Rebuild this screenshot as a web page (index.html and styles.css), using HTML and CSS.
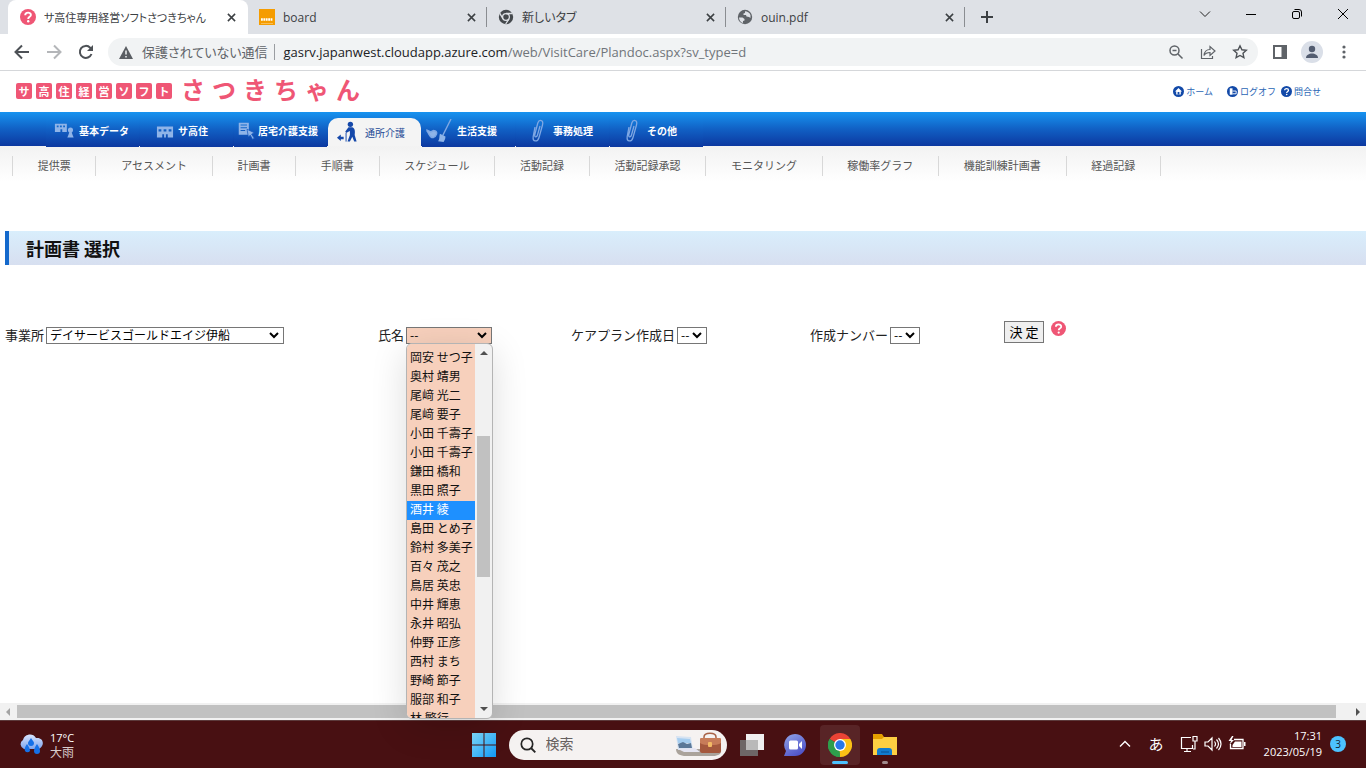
FILE: index.html
```html
<!DOCTYPE html>
<html lang="ja">
<head>
<meta charset="utf-8">
<title>サ高住専用経営ソフトさつきちゃん</title>
<link rel="stylesheet" href="styles.css">
</head>
<body>
<svg class="defs" aria-hidden="true">
  <symbol id="close" viewBox="0 0 10 10"><path d="M1 1l8 8M9 1L1 9" stroke="#3c4043" stroke-width="1.7" fill="none"/></symbol>
  <symbol id="help" viewBox="0 0 16 16"><circle cx="8" cy="8" r="8" fill="#ef5675"/><path d="M5.2 6.2C5.2 2.8 11 2.9 10.900 6C10.900 7.900 8.200 7.700 8.200 9.900" stroke="#fff" stroke-width="1.900" fill="none"/><circle cx="8.200" cy="12.300" r="1.200" fill="#fff"/></symbol>
  <symbol id="building" viewBox="0 0 18 14"><path fill-rule="evenodd" d="M0 1h18v12h-6V9.500H10V13H8V9.500H6V13H0zM2 4v2.500h3V4zM7.500 4v2.500h3V4zM13 4v2.500h3V4z"/></symbol>
  <symbol id="clip" viewBox="0 0 14 24"><path d="M4 8L2.200 17.500C1.500 23 6.500 23.500 8 18.500L11.500 6C13 .5 8 .2 6.800 4L3.800 15.500C3.200 18.500 5.700 18.700 6.500 16L9 7" fill="none" stroke="currentColor" stroke-width="1.300"/></symbol>
</svg>

<header class="browser">
  <div class="tabs">
    <div class="tab tab-active">
      <svg class="favicon"><use href="#help"/></svg>
      <span class="tab-title">サ高住専用経営ソフトさつきちゃん</span>
      <button class="tab-close" aria-label="閉じる"><svg><use href="#close"/></svg></button>
    </div>
    <div class="tab">
      <svg class="favicon" viewBox="0 0 16 16"><path fill="#f59c00" d="M0 0h16v16H0z"/><path d="M2 10.500h12" stroke="#fff" stroke-width="2.400" stroke-dasharray="1.800 .6"/><path d="M2 14.500h12" stroke="#fbd38c" stroke-width=".6"/></svg>
      <span class="tab-title">board</span>
      <button class="tab-close" aria-label="閉じる"><svg><use href="#close"/></svg></button>
    </div>
    <div class="tab">
      <svg class="favicon" viewBox="0 0 16 16"><circle cx="8" cy="8" r="7.200" fill="#45494d"/><circle cx="8" cy="8" r="3.400" fill="none" stroke="#dee1e6" stroke-width="1.300"/><path d="M8 4.500h6.500M5 9.800L1.700 4.200M11 9.800L7.700 15" stroke="#dee1e6" stroke-width="1.300"/></svg>
      <span class="tab-title">新しいタブ</span>
      <button class="tab-close" aria-label="閉じる"><svg><use href="#close"/></svg></button>
    </div>
    <div class="tab">
      <svg class="favicon" viewBox="0 0 16 16"><circle cx="8" cy="8" r="7.200" fill="#5f6368"/><path d="M2 8.500h3.500l2 1.500v1.500L6 12v2C3.500 13.300 2 11 2 8.500zM8 2.300c2 0 4.500 1.300 5.500 3.700v3L12 8l-2.500-.5L9 6H6.500V4.500L8 4z" fill="#dee1e6"/></svg>
      <span class="tab-title">ouin.pdf</span>
      <button class="tab-close" aria-label="閉じる"><svg><use href="#close"/></svg></button>
    </div>
    <button class="new-tab" aria-label="新しいタブを開く"><svg viewBox="0 0 12 12"><path d="M6 0v12M0 6h12" stroke="#3c4043" stroke-width="2"/></svg></button>
    <div class="window-buttons">
      <button aria-label="タブを検索"><svg viewBox="0 0 12 12"><path d="M1 3.500l5 5 5-5" fill="none" stroke="#222"/></svg></button>
      <button aria-label="最小化"><svg viewBox="0 0 12 12"><path d="M1 6.500h10" stroke="#000"/></svg></button>
      <button aria-label="元に戻す"><svg viewBox="0 0 12 12"><rect x="1.500" y="3.500" width="7" height="7" rx="1.500" fill="none" stroke="#000"/><path d="M3.500 1.500H8a2.500 2.500 0 0 1 2.500 2.500v4.500" fill="none" stroke="#000"/></svg></button>
      <button aria-label="閉じる"><svg viewBox="0 0 12 12"><path d="M1 1l10 10M11 1L1 11" stroke="#000"/></svg></button>
    </div>
  </div>
  <div class="toolbar">
    <div class="history">
      <button aria-label="戻る"><svg viewBox="0 0 16 16"><path d="M15 8H2M8 1.500L1.500 8 8 14.500" fill="none" stroke="#4d5156" stroke-width="2"/></svg></button>
      <button aria-label="進む"><svg viewBox="0 0 16 16"><path d="M1 8h13M8 1.500L14.500 8 8 14.500" fill="none" stroke="#b4b6b9" stroke-width="2"/></svg></button>
      <button aria-label="再読み込み"><svg viewBox="0 0 16 16"><path d="M13.500 10A6 6 0 1 1 12.200 3.700L14 5.500" fill="none" stroke="#4d5156" stroke-width="2"/><path d="M15 1v6H9z" fill="#4d5156"/></svg></button>
    </div>
    <div class="omnibox">
      <svg class="warn" viewBox="0 0 14 13"><path d="M7 0l7 13H0z" fill="#5a5e63"/><path d="M7 4.500v4M7 10v1.500" stroke="#f1f3f4" stroke-width="1.500"/></svg>
      <span class="insecure">保護されていない通信</span>
      <span class="url"><b>gasrv.japanwest.cloudapp.azure.com</b>/web/VisitCare/Plandoc.aspx?sv_type=d</span>
      <div class="omni-actions">
        <button aria-label="ズーム"><svg viewBox="0 0 16 16"><circle cx="6.500" cy="6.500" r="4.500" fill="none" stroke="#5f6368" stroke-width="1.500"/><path d="M4.500 6.500h4M10 10l4.500 4.500" stroke="#5f6368" stroke-width="1.500"/></svg></button>
        <button aria-label="共有"><svg viewBox="0 0 16 16"><path d="M1.500 5v9.500h11V12M4 11.500C4.500 7 7 5.500 10 5.500V2.500l5 4.500-5 4.500v-3c-2.500 0-4.500.5-6 3z" fill="none" stroke="#5f6368" stroke-width="1.200"/></svg></button>
        <button aria-label="ブックマーク"><svg viewBox="0 0 16 16"><path d="M8 1.800l1.900 4 4.400.5-3.300 3 .9 4.400L8 11.500l-3.900 2.200.9-4.400-3.300-3 4.400-.5z" fill="none" stroke="#4d5156" stroke-width="1.400"/></svg></button>
      </div>
    </div>
    <div class="tool-actions">
      <button aria-label="サイドパネル"><svg viewBox="0 0 16 16"><path fill="#5f6368" fill-rule="evenodd" d="M1 1h14v14H1zM3 3v10h6.500V3z"/></svg></button>
      <button class="avatar" aria-label="プロフィール"><svg viewBox="0 0 16 16"><circle cx="8" cy="5" r="3.200" fill="#525c70"/><path d="M2 14c0-6 12-6 12 0z" fill="#525c70"/></svg></button>
      <button aria-label="メニュー"><svg viewBox="0 0 16 16" fill="#5f6368"><circle cx="8" cy="3" r="1.600"/><circle cx="8" cy="8" r="1.600"/><circle cx="8" cy="13" r="1.600"/></svg></button>
    </div>
  </div>
</header>

<main class="page">
  <div class="site-head">
    <a class="logo" href="#" aria-label="サ高住経営ソフト さつきちゃん">
      <span class="tiles"><i>サ</i><i>高</i><i>住</i><i>経</i><i>営</i><i>ソ</i><i>フ</i><i>ト</i></span>
      <span class="brand"><i>さ</i><i>つ</i><i>き</i><i>ち</i><i>ゃ</i><i>ん</i></span>
    </a>
    <div class="site-links">
      <a class="home" href="#"><svg viewBox="0 0 12 12"><circle cx="6" cy="6" r="6" fill="#1249a8"/><path d="M6 2.200L2.200 6h1.300v3.300h5V6h1.300z" fill="#fff"/><path d="M5 6.500h2v2.800H5z" fill="#1249a8"/></svg>ホーム</a>
      <a href="#"><svg viewBox="0 0 12 12"><circle cx="6" cy="6" r="6" fill="#1249a8"/><path d="M3 2.500h3v7H3z" fill="#fff"/><path d="M6 5.500h4v3H6" stroke="#fff" fill="none"/></svg>ログオフ</a>
      <a href="#"><svg viewBox="0 0 12 12"><circle cx="6" cy="6" r="6" fill="#1249a8"/><path d="M4 4.700c0-2.500 4.200-2.400 4.200 0C8.200 6 6.200 6 6.200 7.500" stroke="#fff" stroke-width="1.400" fill="none"/><circle cx="6.200" cy="9.300" r=".9" fill="#fff"/></svg>問合せ</a>
    </div>
  </div>

  <nav class="main-nav">
    <a href="#"><svg viewBox="0 0 24 20"><path fill-rule="evenodd" d="M1 2h13v9H9V8H7v3H1zM3 4v2h2V4zM6.500 4v2h2V4zM10 4v2h2V4z"/><circle cx="18" cy="9" r="2.800"/><path d="M16.800 11h2.400l1.300 4 1 2h-7l1-2z"/></svg>基本データ</a>
    <a class="roomy" href="#"><svg viewBox="0 0 24 20"><use href="#building" x="3" y="4" width="18" height="14"/></svg>サ高住</a>
    <a class="tight" href="#"><svg viewBox="0 0 24 20"><path fill-rule="evenodd" d="M3 1h11v13H3zM5 3v1h7V3zM5 6v1h7V6zM5 9v1h5V9z"/><path d="M12 8l8 4-3 1.500 3 4.500-2 1-2.500-4.500-2 2z" stroke="#1458bf" stroke-width=".8"/></svg>居宅介護支援</a>
    <a class="current" href="#"><svg viewBox="0 0 24 22" fill="#1548aa"><circle cx="15" cy="3" r="2.800"/><path d="M13 6h4c3 1 3 5 2.500 8l2 7h-2.500l-2-5-2.500 5H12l2.500-7V10l-4 2-.8-1.500z"/><path d="M10.500 12v9" stroke="#1548aa"/><path d="M1 17l4-3.500V16h3v2.500H5v2z"/></svg>通所介護</a>
    <a href="#"><svg class="broom" viewBox="0 0 28 26"><path d="M1 12l4 2 3-1.500 2 .5c3 1 1 6-2 7-4 1-4-3-7-7zM27 0L18 18" stroke="currentColor" stroke-width="1.500"/><path d="M15 16l6 3c0 3-1 4-2 6l-6-1c2-2 1-5 2-8z"/></svg>生活支援</a>
    <a href="#"><svg class="clip"><use href="#clip"/></svg>事務処理</a>
    <a href="#"><svg class="clip"><use href="#clip"/></svg>その他</a>
  </nav>

  <nav class="sub-nav">
    <div class="sub-items"><a href="#">提供票</a><a href="#">アセスメント</a><a href="#">計画書</a><a href="#">手順書</a><a href="#">スケジュール</a><a href="#">活動記録</a><a href="#">活動記録承認</a><a href="#">モニタリング</a><a href="#">稼働率グラフ</a><a href="#">機能訓練計画書</a><a href="#">経過記録</a></div>
  </nav>

  <h1 class="title">計画書 選択</h1>

  <form class="filters">
    <div class="field"><label for="office">事業所</label><select id="office" class="wide"><option>デイサービスゴールドエイジ伊船</option></select></div>
    <div class="field">
      <label for="person">氏名</label>
      <div class="picker">
        <select id="person" class="person"><option>--</option></select>
        <div class="popup">
          <ul role="listbox" aria-label="氏名">
            <li role="option">岡安 せつ子</li><li role="option">奥村 靖男</li><li role="option">尾﨑 光二</li><li role="option">尾﨑 要子</li><li role="option">小田 千壽子</li><li role="option">小田 千壽子</li><li role="option">鎌田 橋和</li><li role="option">黒田 照子</li><li role="option" aria-selected="true">酒井 綾</li><li role="option">島田 とめ子</li><li role="option">鈴村 多美子</li><li role="option">百々 茂之</li><li role="option">鳥居 英忠</li><li role="option">中井 輝恵</li><li role="option">永井 昭弘</li><li role="option">仲野 正彦</li><li role="option">西村 まち</li><li role="option">野崎 節子</li><li role="option">服部 和子</li><li role="option">林 繁行</li>
          </ul>
          <div class="v-scroll">
            <svg viewBox="0 0 8 8"><path d="M0 6l4-4 4 4z" fill="#505050"/></svg>
            <div class="v-track"><div class="v-thumb"></div></div>
            <svg viewBox="0 0 8 8"><path d="M0 2l4 4 4-4z" fill="#505050"/></svg>
          </div>
        </div>
      </div>
    </div>
    <div class="field"><label for="date">ケアプラン作成日</label><select id="date" class="short"><option>--</option></select></div>
    <div class="field"><label for="number">作成ナンバー</label><select id="number" class="short"><option>--</option></select></div>
    <div class="submit"><button type="button">決 定</button><svg class="hint" role="img" aria-label="ヘルプ"><use href="#help"/></svg></div>
  </form>
</main>

<div class="h-scroll">
  <svg viewBox="0 0 8 8"><path d="M6 0L2 4l4 4z" fill="#a3a3a3"/></svg>
  <div class="h-track"><div class="h-thumb"></div></div>
  <svg viewBox="0 0 8 8"><path d="M2 0l4 4-4 4z" fill="#505050"/></svg>
</div>

<footer class="taskbar">
  <div class="weather">
    <svg viewBox="0 0 24 24"><defs><linearGradient id="cloud" x2="0" y2="1"><stop stop-color="#d8e6ff"/><stop offset="1" stop-color="#7fa4ec"/></linearGradient></defs><path d="M5 16a5 5 0 0 1-1-9C5 1 14-1 17 5c8-1 9 8 3 11z" fill="url(#cloud)"/><path d="M12 5c2 3 3 4 3 5a3 3 0 0 1-6 0c0-1 1-2 3-5zM8 11c2 3 3 5 3 7a3 3 0 0 1-5 0c-1-2 0-4 2-7zM18 11c2 3 3 5 3 7a3 3 0 0 1-6 0c0-2 1-4 3-7z" fill="#1570e8"/></svg>
    <div><div class="temp">17°C</div><div>大雨</div></div>
  </div>
  <div class="apps">
    <button aria-label="スタート"><svg viewBox="0 0 24 24"><defs><linearGradient id="win" x2="1" y2="1"><stop stop-color="#80dcff"/><stop offset="1" stop-color="#1098f5"/></linearGradient></defs><path d="M0 0h11.500v11.500H0zM12.500 0H24v11.500H12.500zM0 12.500h11.500V24H0zM12.500 12.500H24V24H12.500z" fill="url(#win)"/></svg></button>
    <div class="search">
      <svg class="lens" viewBox="0 0 16 16"><circle cx="7" cy="7" r="5.700" fill="none" stroke="#252525" stroke-width="1.700"/><path d="M11 11l4.300 4.300" stroke="#252525" stroke-width="1.900"/></svg>
      <input type="text" placeholder="検索" aria-label="検索">
      <svg class="art" viewBox="0 0 48 26"><path d="M1 17h45c1 5-3 7-8 7H11C5 24 1 22 1 17z" fill="#aaa39b"/><path d="M1 4l15 1 2 13H3z" fill="#d6e3f2"/><path d="M2 6l13 1 1 4H3z" fill="#a5cdf0"/><path d="M3 12l5-2 4 2 4-1 1 5H4z" fill="#5b7898"/><path d="M3 17l17-1 5 4H9z" fill="#e5e5f2"/><path d="M29 8V5c0-5 12-5 12 0v3" fill="none" stroke="#a86145" stroke-width="1.500"/><rect x="25" y="6" width="21" height="15" rx="2" fill="#a4583d"/><path d="M25 8c0-2 1-2 3-2h15c2 0 3 0 3 2v3c-4 3-17 3-21 0z" fill="#c77c59"/><rect x="33" y="10" width="4" height="5" rx="1" fill="#f2ba65"/></svg>
    </div>
    <button aria-label="タスク ビュー"><svg viewBox="0 0 24 24"><path d="M6 1h18v16H6z" fill="#efefef"/><path d="M0 7h18v16H0z" fill="#6d6666"/><path d="M6 7h12v10H6z" fill="#b9b9b9"/></svg></button>
    <button class="chat" aria-label="チャット"><svg viewBox="0 0 24 24"><defs><linearGradient id="chat" x2=".6" y2="1"><stop stop-color="#91a5e8"/><stop offset="1" stop-color="#5053c8"/></linearGradient></defs><path d="M12 1a11 11 0 1 1 0 22H1l2-5A11 11 0 0 1 12 1z" fill="url(#chat)"/><rect x="6" y="7.500" width="9" height="9" rx="1.500" fill="#fff"/><path d="M16 11l3-3v8l-3-3z" fill="#fff"/></svg></button>
    <button class="running" aria-label="Chrome"><svg viewBox="0 0 24 24"><path d="M12 12L1.600 6A12 12 0 0 1 22.400 6z" fill="#ea4335"/><path d="M12 12L22.400 6A12 12 0 0 1 12 24z" fill="#fbc116"/><path d="M12 12v12A12 12 0 0 1 1.600 6z" fill="#2e9e4c"/><path d="M12 6h10.400L17.200 15 12 24l-1-6z" fill="#fbc116"/><path d="M1.600 6l5.200 9 5 3.500L12 24A12 12 0 0 1 1.600 6z" fill="#2e9e4c"/><circle cx="12" cy="12" r="6" fill="#fff"/><circle cx="12" cy="12" r="4.700" fill="#2877e8"/></svg></button>
    <button class="folder" aria-label="エクスプローラー"><svg viewBox="0 0 24 24"><path d="M0 1h9l2 3h13v6H0z" fill="#e5a000"/><path d="M0 6h9l2-2h13v18H0z" fill="#fdcf42"/><path d="M4 22v-4a3 3 0 0 1 3-3h9a3 3 0 0 1 3 3v4z" fill="#117ccf"/><path d="M8 19h8" stroke="#0c5ea5" stroke-width="1.500"/></svg></button>
  </div>
  <div class="tray">
    <svg class="up" viewBox="0 0 12 12"><path d="M1 8.500l5-5 5 5" fill="none" stroke="#fff" stroke-width="1.400"/></svg>
    <span class="ime">あ</span>
    <div class="status">
      <svg viewBox="0 0 18 18"><path d="M11 2.500H1.500v11h11V10M7 13.500v3M4 16.500h7M13 1.500h4v4.500h-4zM15 6v8h-2" fill="none" stroke="#fff" stroke-width="1.200"/></svg>
      <svg viewBox="0 0 18 18"><path d="M1 7h3l4-4v12l-4-4H1zM10.500 6.500q2 2.500 0 5M12.500 4.500q4 4.500 0 9M14.500 3q5 6 0 12" fill="none" stroke="#fff" stroke-width="1.200"/></svg>
      <svg viewBox="0 0 18 18"><path d="M6 4.500h9v9H2.500V9" fill="none" stroke="#fff" stroke-width="1.300"/><path d="M7 6.500h6.500v5.500H4.500V10zM16 7h1.500v4H16zM4 1L.5 6H3L1.500 9.500 6 5H3.500L5.500 1z" fill="#fff"/></svg>
    </div>
    <div class="clock"><div>17:31</div><div>2023/05/19</div></div>
    <span class="count">3</span>
  </div>
</footer>
</body>
</html>
```
FILE: styles.css
```css
* { box-sizing: border-box; }

body {
  margin: 0;
  min-height: 100vh;
  display: flex;
  flex-direction: column;
  overflow: hidden;
  background: #fff;
  color: #000;
  font-family: "Noto Sans CJK JP", sans-serif;
  font-size: 12px;
  font-weight: 400;
}

a { color: inherit; text-decoration: none; }
i { font-style: normal; }
svg { display: block; flex: none; }
button { padding: 0; border: 0; background: none; font: inherit; color: inherit; }
.defs { position: absolute; width: 0; height: 0; }

/* Browser frame */
.browser { font-family: "Open Sans", "Noto Sans CJK JP", sans-serif; color: #3c4043; }
.tabs { display: flex; align-items: stretch; height: 34px; padding-left: 8px; background: #dee1e6; }
.tab { display: flex; align-items: center; width: 239px; padding: 0 11px; position: relative; }
.tab::after { content: ""; position: absolute; right: 0; top: 7px; height: 20px; width: 1px; background: #8a8d91; }
.tab-active { width: 240px; padding: 0 12px; background: #fff; border-radius: 8px 8px 0 0; }
.tab-active::after { display: none; }
.favicon { width: 16px; height: 16px; margin-right: 8px; }
.tab-title { flex: 1; font-size: 12px; font-feature-settings: "palt"; white-space: nowrap; overflow: hidden; }
.tab-active .tab-title { font-size: 11px; }
.tab-close svg { width: 9px; height: 9px; }
.new-tab { width: 44px; display: grid; place-items: center; }
.new-tab svg { width: 12px; height: 12px; }
.window-buttons { display: flex; margin-left: auto; height: 28px; }
.window-buttons button { width: 46px; display: grid; place-items: center; }
.window-buttons svg { width: 12px; height: 12px; }

.toolbar { display: flex; align-items: center; height: 37px; border-bottom: 1px solid #d5d7da; background: #fff; }
.history { display: flex; gap: 16px; padding: 0 14px; }
.history svg { width: 16px; height: 16px; }
.omnibox { flex: 1; display: flex; align-items: center; height: 28px; padding: 0 10px; border-radius: 14px; background: #f1f3f4; }
.warn { width: 14px; height: 13px; margin: 0 9px 0 1px; }
.insecure { padding-right: 7px; border-right: 1px solid #9a9da1; color: #5f6368; font-size: 13px; line-height: 16px; font-feature-settings: "palt"; }
.url { padding-left: 8px; color: #70757a; font-size: 13px; }
.url b { color: #202124; font-weight: 400; }
.omni-actions { display: flex; gap: 16px; margin-left: auto; }
.omni-actions svg { width: 16px; height: 16px; }
.tool-actions { display: flex; align-items: center; gap: 13px; padding: 0 14px; }
.tool-actions svg { width: 16px; height: 16px; }
.avatar { display: grid; place-items: center; width: 22px; height: 22px; border-radius: 50%; background: #dadfe8; }

/* Site */
.page { flex: 1; }
.site-head { display: flex; justify-content: space-between; height: 41px; padding: 0 45px 0 16px; }
.logo { display: flex; align-items: center; gap: 9px; padding-bottom: 2px; color: #ef5675; font-weight: 700; }
.tiles { display: flex; gap: 4px; }
.tiles i { width: 16px; height: 16px; border-radius: 2px; background: #ef5675; color: #fff; font-size: 11px; line-height: 16px; text-align: center; }
.brand { display: flex; gap: 7px; padding-bottom: 4px; font-size: 24px; line-height: 36px; }
.site-links { display: flex; align-items: center; gap: 5px; color: #2a66b5; font-size: 9px; }
.site-links a { display: flex; align-items: center; gap: 2px; }
.site-links svg { width: 11px; height: 11px; }
.site-links .home { margin-right: 9px; }

.main-nav { display: flex; gap: 1px; height: 34px; padding-left: 46px; background: linear-gradient(#1793f0, #1160c4 50%, #0c38a0); color: #fff; font-size: 10px; font-weight: 700; }
.main-nav a { display: flex; align-items: center; gap: 3px; width: 93px; height: 35px; padding: 2px 0 0 8px; background: linear-gradient(#1793f0, #1160c4 50%, #0c38a0); white-space: nowrap; }
.main-nav .roomy { gap: 2px; padding-left: 14px; }
.main-nav .tight { gap: 0; padding-left: 2px; }
.main-nav a:not(.current) svg { fill: #8fb4e8; color: #7fa8e4; }
.main-nav svg { width: 22px; height: 20px; }
.main-nav .clip { width: 14px; height: 24px; margin: 0 5px 0 7px; fill: none; }
.main-nav .broom { width: 26px; height: 24px; margin: 0 2px 0 -4px; }
.main-nav .current { align-self: flex-end; height: 28px; padding-top: 0; border-radius: 10px 10px 0 0; background: #f4f4f4; color: #244a94; font-weight: 400; }
.main-nav .current svg { width: 23px; height: 22px; margin-right: 3px; }

.sub-nav { height: 42px; padding: 10px 0 0 12px; background: linear-gradient(#f2f2f2, #fff 85%); color: #555; font-size: 11px; }
.sub-items { display: flex; max-width: 1149px; }
.sub-items a { flex: 1 1 auto; padding: 0 24px 2px; border-left: 1px solid #d8d8d8; line-height: 18px; text-align: center; white-space: nowrap; }
.sub-items a:last-child { border-right: 1px solid #d8d8d8; }

.title { margin: 43px 0 0 5px; padding-left: 17px; border-left: 4px solid #1469cc; background: linear-gradient(#d9eefc, #d7dff0); color: #111; font-size: 18px; line-height: 34px; font-weight: 700; }

.filters { display: grid; grid-template-columns: 373fr 193fr 239fr 194fr 362fr; align-items: center; margin-top: 56px; padding-left: 5px; }
.field { display: flex; align-items: center; gap: 2px; height: 28px; color: #222; white-space: nowrap; }
.field label { padding-bottom: 2px; font-size: 13px; }
select {
  appearance: none;
  height: 17px;
  padding: 0 0 0 3px;
  border: 1px solid #767676;
  border-radius: 0;
  background: #fff url("data:image/svg+xml,%3Csvg xmlns='http://www.w3.org/2000/svg' viewBox='0 0 10 7'%3E%3Cpath d='M1 1l4 4 4-4' fill='none' stroke='%23000' stroke-width='2'/%3E%3C/svg%3E") no-repeat right 4px center / 10px 7px;
  color: #000;
  font-family: "Noto Sans CJK JP", sans-serif;
  font-size: 12px;
  line-height: 14px;
}
.wide { width: 238px; }
.person { display: block; width: 86px; background-color: #f7d0bc; }
.short { width: 30px; }
.submit { display: flex; align-items: flex-start; gap: 7px; height: 28px; }
.submit button { width: 40px; height: 22px; border: 1px solid #767676; background: #efefef; font-size: 13px; line-height: 18px; }
.hint { width: 15px; height: 15px; }

.picker { position: relative; }
.popup { position: absolute; top: 16px; left: 0; z-index: 5; display: flex; width: 87px; height: 376px; overflow: hidden; border: 1px solid #b4b4b4; border-radius: 6px; background: #f1f1f1; box-shadow: 0 8px 36px rgba(0, 0, 0, .14); }
.popup ul { flex: 1; margin: 0; padding: 5px 0 0; list-style: none; background: #f7d0bc; color: #111; }
.popup li { padding: 0 0 3px 3px; font-size: 12px; line-height: 16px; white-space: nowrap; }
.popup li[aria-selected] { background: #1e90ff; color: #fff; }
.v-scroll { display: flex; flex-direction: column; align-items: center; gap: 5px; width: 17px; padding: 5px 0; }
.v-scroll svg { width: 8px; height: 8px; }
.v-track { flex: 1; width: 13px; padding-top: 74px; }
.v-thumb { height: 141px; background: #c1c1c1; }

.h-scroll { display: flex; align-items: center; gap: 5px; height: 17px; padding: 0 4px; background: #f1f1f1; }
.h-scroll svg { width: 8px; height: 8px; }
.h-track { flex: 1; padding-right: 13px; }
.h-thumb { height: 13px; background: #c1c1c1; }

/* Taskbar */
.taskbar { display: grid; grid-template-columns: 1fr auto 1fr; align-items: center; height: 48px; border-top: 1px solid #5c3a3b; background: #481012; color: #fff; font-family: "Open Sans", "Noto Sans CJK JP", sans-serif; }
.weather { display: flex; align-items: center; gap: 7px; padding-left: 19px; font-size: 12px; line-height: 15px; color: #d8cccc; }
.weather svg { width: 24px; height: 24px; }
.temp { font-size: 11px; color: #fff; }
.apps { display: flex; align-items: center; gap: 13px; padding-left: 2px; }
.apps svg { width: 24px; height: 24px; }
.search { display: flex; align-items: center; width: 218px; height: 30px; padding: 0 4px 0 11px; border-radius: 15px; background: #f5f2f1; }
.search input { flex: 1; min-width: 0; padding: 0 0 3px 10px; border: 0; background: none; font: 14px "Noto Sans CJK JP", sans-serif; }
.search input::placeholder { color: #66605f; }
.search .lens { width: 16px; height: 16px; }
.search .art { width: 48px; height: 28px; }
.chat { margin-left: 6px; }
.running, .folder { position: relative; }
.running { display: grid; place-items: center; width: 40px; height: 40px; border-radius: 4px; background: #582426; }
.running::after { content: ""; position: absolute; bottom: 1px; left: 12px; width: 16px; height: 3px; border-radius: 2px; background: #4cc2ff; }
.folder::after { content: ""; position: absolute; bottom: -7px; left: 9px; width: 6px; height: 3px; border-radius: 2px; background: #a08a8b; }
.tray { display: flex; align-items: center; justify-content: flex-end; padding: 0 20px 2px 0; }
.up { width: 12px; height: 12px; }
.ime { margin: 0 16px 0 18px; font-size: 15px; }
.status { display: flex; gap: 6px; }
.status svg { width: 18px; height: 18px; }
.clock { margin: 0 8px 0 18px; text-align: right; font-size: 11px; line-height: 16px; }
.count { width: 16px; height: 16px; border-radius: 50%; background: #4cc2ff; color: #123; font-size: 10px; line-height: 16px; text-align: center; }
```
